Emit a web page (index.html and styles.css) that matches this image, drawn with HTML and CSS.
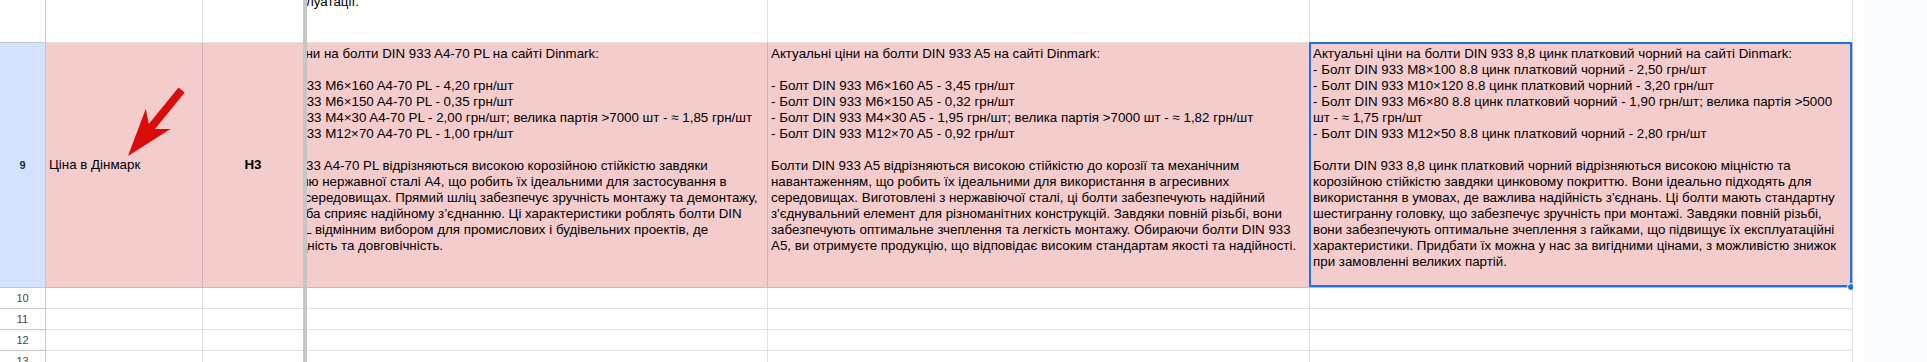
FILE: index.html
```html
<!DOCTYPE html>
<html>
<head>
    <meta charset="utf-8">
    <title>Dinmark - ціни</title>
    <link rel="stylesheet" href="styles.css">
</head>
<body>
    <div class="sheet">
        <div class="frozen">
            <div class="row r8">
                <div class="rh"></div>
                <div class="cell cb"></div>
                <div class="cell cc"></div>
            </div>
            <div class="row r9">
                <div class="rh selected">9</div>
                <div class="cell cb pink middle">
                    Ціна в Дінмарк
                    <svg class="arrow" width="157" height="245" viewBox="0 0 157 245">
                        <polygon points="82,113 124.6,85.9 109,86 138.7,49.5 132.5,44.5 102.8,81 99.8,65.7" fill="#d90b0b"/>
                    </svg>
                </div>
                <div class="cell cc pink middle center bold">Н3</div>
            </div>
            <div class="row"><div class="rh">10</div><div class="cell cb"></div><div class="cell cc"></div></div>
            <div class="row"><div class="rh">11</div><div class="cell cb"></div><div class="cell cc"></div></div>
            <div class="row"><div class="rh">12</div><div class="cell cb"></div><div class="cell cc"></div></div>
            <div class="row"><div class="rh">13</div><div class="cell cb"></div><div class="cell cc"></div></div>
        </div>

        <div class="divider"></div>

        <div class="scroll">
            <div class="track">
                <div class="row r8">
                    <div class="cell cd"><div class="tail-line">умовах експлуатації.</div></div>
                    <div class="cell ce"></div>
                    <div class="cell cf"></div>
                </div>
                <div class="row r9">
                    <div class="cell cd pink">
                        Актуальні ціни на болти DIN 933 A4-70 PL на сайті Dinmark:<br>
                        <br>
                        - Болт DIN 933 M6×160 A4-70 PL - 4,20 грн/шт<br>
                        - Болт DIN 933 M6×150 A4-70 PL - 0,35 грн/шт<br>
                        - Болт DIN 933 M4×30 A4-70 PL - 2,00 грн/шт; велика партія &gt;7000 шт - ≈ 1,85 грн/шт<br>
                        - Болт DIN 933 M12×70 A4-70 PL - 1,00 грн/шт<br>
                        <br>
                        Болти DIN 933 A4-70 PL відрізняються високою корозійною стійкістю завдяки<br>
                        використанню нержавної сталі A4, що робить їх ідеальними для застосування в<br>
                        агресивних середовищах. Прямий шліц забезпечує зручність монтажу та демонтажу,<br>
                        а повна різьба сприяє надійному з’єднанню. Ці характеристики роблять болти DIN<br>
                        933 A4-70 PL відмінним вибором для промислових і будівельних проектів, де<br>
                        важлива міцність та довговічність.
                    </div>
                    <div class="cell ce pink">
                        Актуальні ціни на болти DIN 933 A5 на сайті Dinmark:<br>
                        <br>
                        - Болт DIN 933 M6×160 A5 - 3,45 грн/шт<br>
                        - Болт DIN 933 M6×150 A5 - 0,32 грн/шт<br>
                        - Болт DIN 933 M4×30 A5 - 1,95 грн/шт; велика партія &gt;7000 шт - ≈ 1,82 грн/шт<br>
                        - Болт DIN 933 M12×70 A5 - 0,92 грн/шт<br>
                        <br>
                        Болти DIN 933 A5 відрізняються високою стійкістю до корозії та механічним<br>
                        навантаженням, що робить їх ідеальними для використання в агресивних<br>
                        середовищах. Виготовлені з нержавіючої сталі, ці болти забезпечують надійний<br>
                        з'єднувальний елемент для різноманітних конструкцій. Завдяки повній різьбі, вони<br>
                        забезпечують оптимальне зчеплення та легкість монтажу. Обираючи болти DIN 933<br>
                        A5, ви отримуєте продукцію, що відповідає високим стандартам якості та надійності.
                    </div>
                    <div class="cell cf pink active">
                        Актуальні ціни на болти DIN 933 8,8 цинк платковий чорний на сайті Dinmark:<br>
                        - Болт DIN 933 M8×100 8.8 цинк платковий чорний - 2,50 грн/шт<br>
                        - Болт DIN 933 M10×120 8.8 цинк платковий чорний - 3,20 грн/шт<br>
                        - Болт DIN 933 M6×80 8.8 цинк платковий чорний - 1,90 грн/шт; велика партія &gt;5000<br>
                        шт - ≈ 1,75 грн/шт<br>
                        - Болт DIN 933 M12×50 8.8 цинк платковий чорний - 2,80 грн/шт<br>
                        <br>
                        Болти DIN 933 8,8 цинк платковий чорний відрізняються високою міцністю та<br>
                        корозійною стійкістю завдяки цинковому покриттю. Вони ідеально підходять для<br>
                        використання в умовах, де важлива надійність з'єднань. Ці болти мають стандартну<br>
                        шестигранну головку, що забезпечує зручність при монтажі. Завдяки повній різьбі,<br>
                        вони забезпечують оптимальне зчеплення з гайками, що підвищує їх експлуатаційні<br>
                        характеристики. Придбати їх можна у нас за вигідними цінами, з можливістю знижок<br>
                        при замовленні великих партій.
                        <span class="handle"></span>
                    </div>
                </div>
                <div class="row"><div class="cell cd"></div><div class="cell ce"></div><div class="cell cf"></div></div>
                <div class="row"><div class="cell cd"></div><div class="cell ce"></div><div class="cell cf"></div></div>
                <div class="row"><div class="cell cd"></div><div class="cell ce"></div><div class="cell cf"></div></div>
                <div class="row"><div class="cell cd"></div><div class="cell ce"></div><div class="cell cf"></div></div>
            </div>
        </div>

        <div class="gutter"></div>
        <div class="side"></div>
    </div>
</body>
</html>
```

FILE: styles.css
```css
* {
    box-sizing: border-box;
    margin: 0;
    padding: 0;
}

body {
    width: 1927px;
    height: 362px;
    overflow: hidden;
    background: #fff;
    font-family: "Liberation Sans", Arial, sans-serif;
    font-size: 13.333px;
    color: #000;
}

.sheet {
    display: flex;
    height: 362px;
}

.frozen {
    width: 303px;
    flex: none;
}

.divider {
    width: 4px;
    flex: none;
    background: #c4c7c5;
}

.scroll {
    width: 1546px;
    flex: none;
    overflow: hidden;
}

/* the sheet is scrolled sideways, column D is partly under the frozen panes */
.track {
    width: 1625px;
    margin-left: -79px;
}

.gutter {
    width: 11px;
    flex: none;
}

.side {
    flex: 1;
    background: #f9fbfd;
}

.row {
    display: flex;
    height: 21px;
}

.row.r8 {
    height: 43px;
}

.row.r9 {
    height: 245px;
}

.rh {
    width: 46px;
    flex: none;
    display: flex;
    align-items: center;
    justify-content: center;
    border-right: 1px solid #c7c7c7;
    border-bottom: 1px solid #c7c7c7;
    font-size: 11px;
    color: #444746;
}

.rh.selected {
    background: #d3e3fd;
    color: #1b2a48;
    font-weight: bold;
}

.cell {
    flex: none;
    padding: 3px;
    line-height: 16px;
    white-space: nowrap;
    border-right: 1px solid rgba(0, 0, 0, 0.12);
    border-bottom: 1px solid rgba(0, 0, 0, 0.12);
}

.cb { width: 157px; position: relative; }
.cc { width: 100px; border-right: none; }
.cd { width: 540px; }
.ce { width: 542px; }
.cf { width: 543px; }

.pink {
    background: #f4cccc;
}

.middle {
    display: flex;
    align-items: center;
}

.center {
    justify-content: center;
}

.bold {
    font-weight: bold;
}

.tail-line {
    margin-top: -9px;
}

.arrow {
    position: absolute;
    left: 0;
    top: 0;
}

.active {
    position: relative;
}

.active::after {
    content: "";
    position: absolute;
    left: -1px;
    top: -1px;
    right: 0;
    bottom: 0;
    border: 2px solid #1a73e8;
    pointer-events: none;
}

.handle {
    position: absolute;
    right: -3px;
    bottom: -4px;
    width: 8px;
    height: 8px;
    border-radius: 50%;
    background: #1a73e8;
    border: 1px solid #fff;
    z-index: 2;
}
```
